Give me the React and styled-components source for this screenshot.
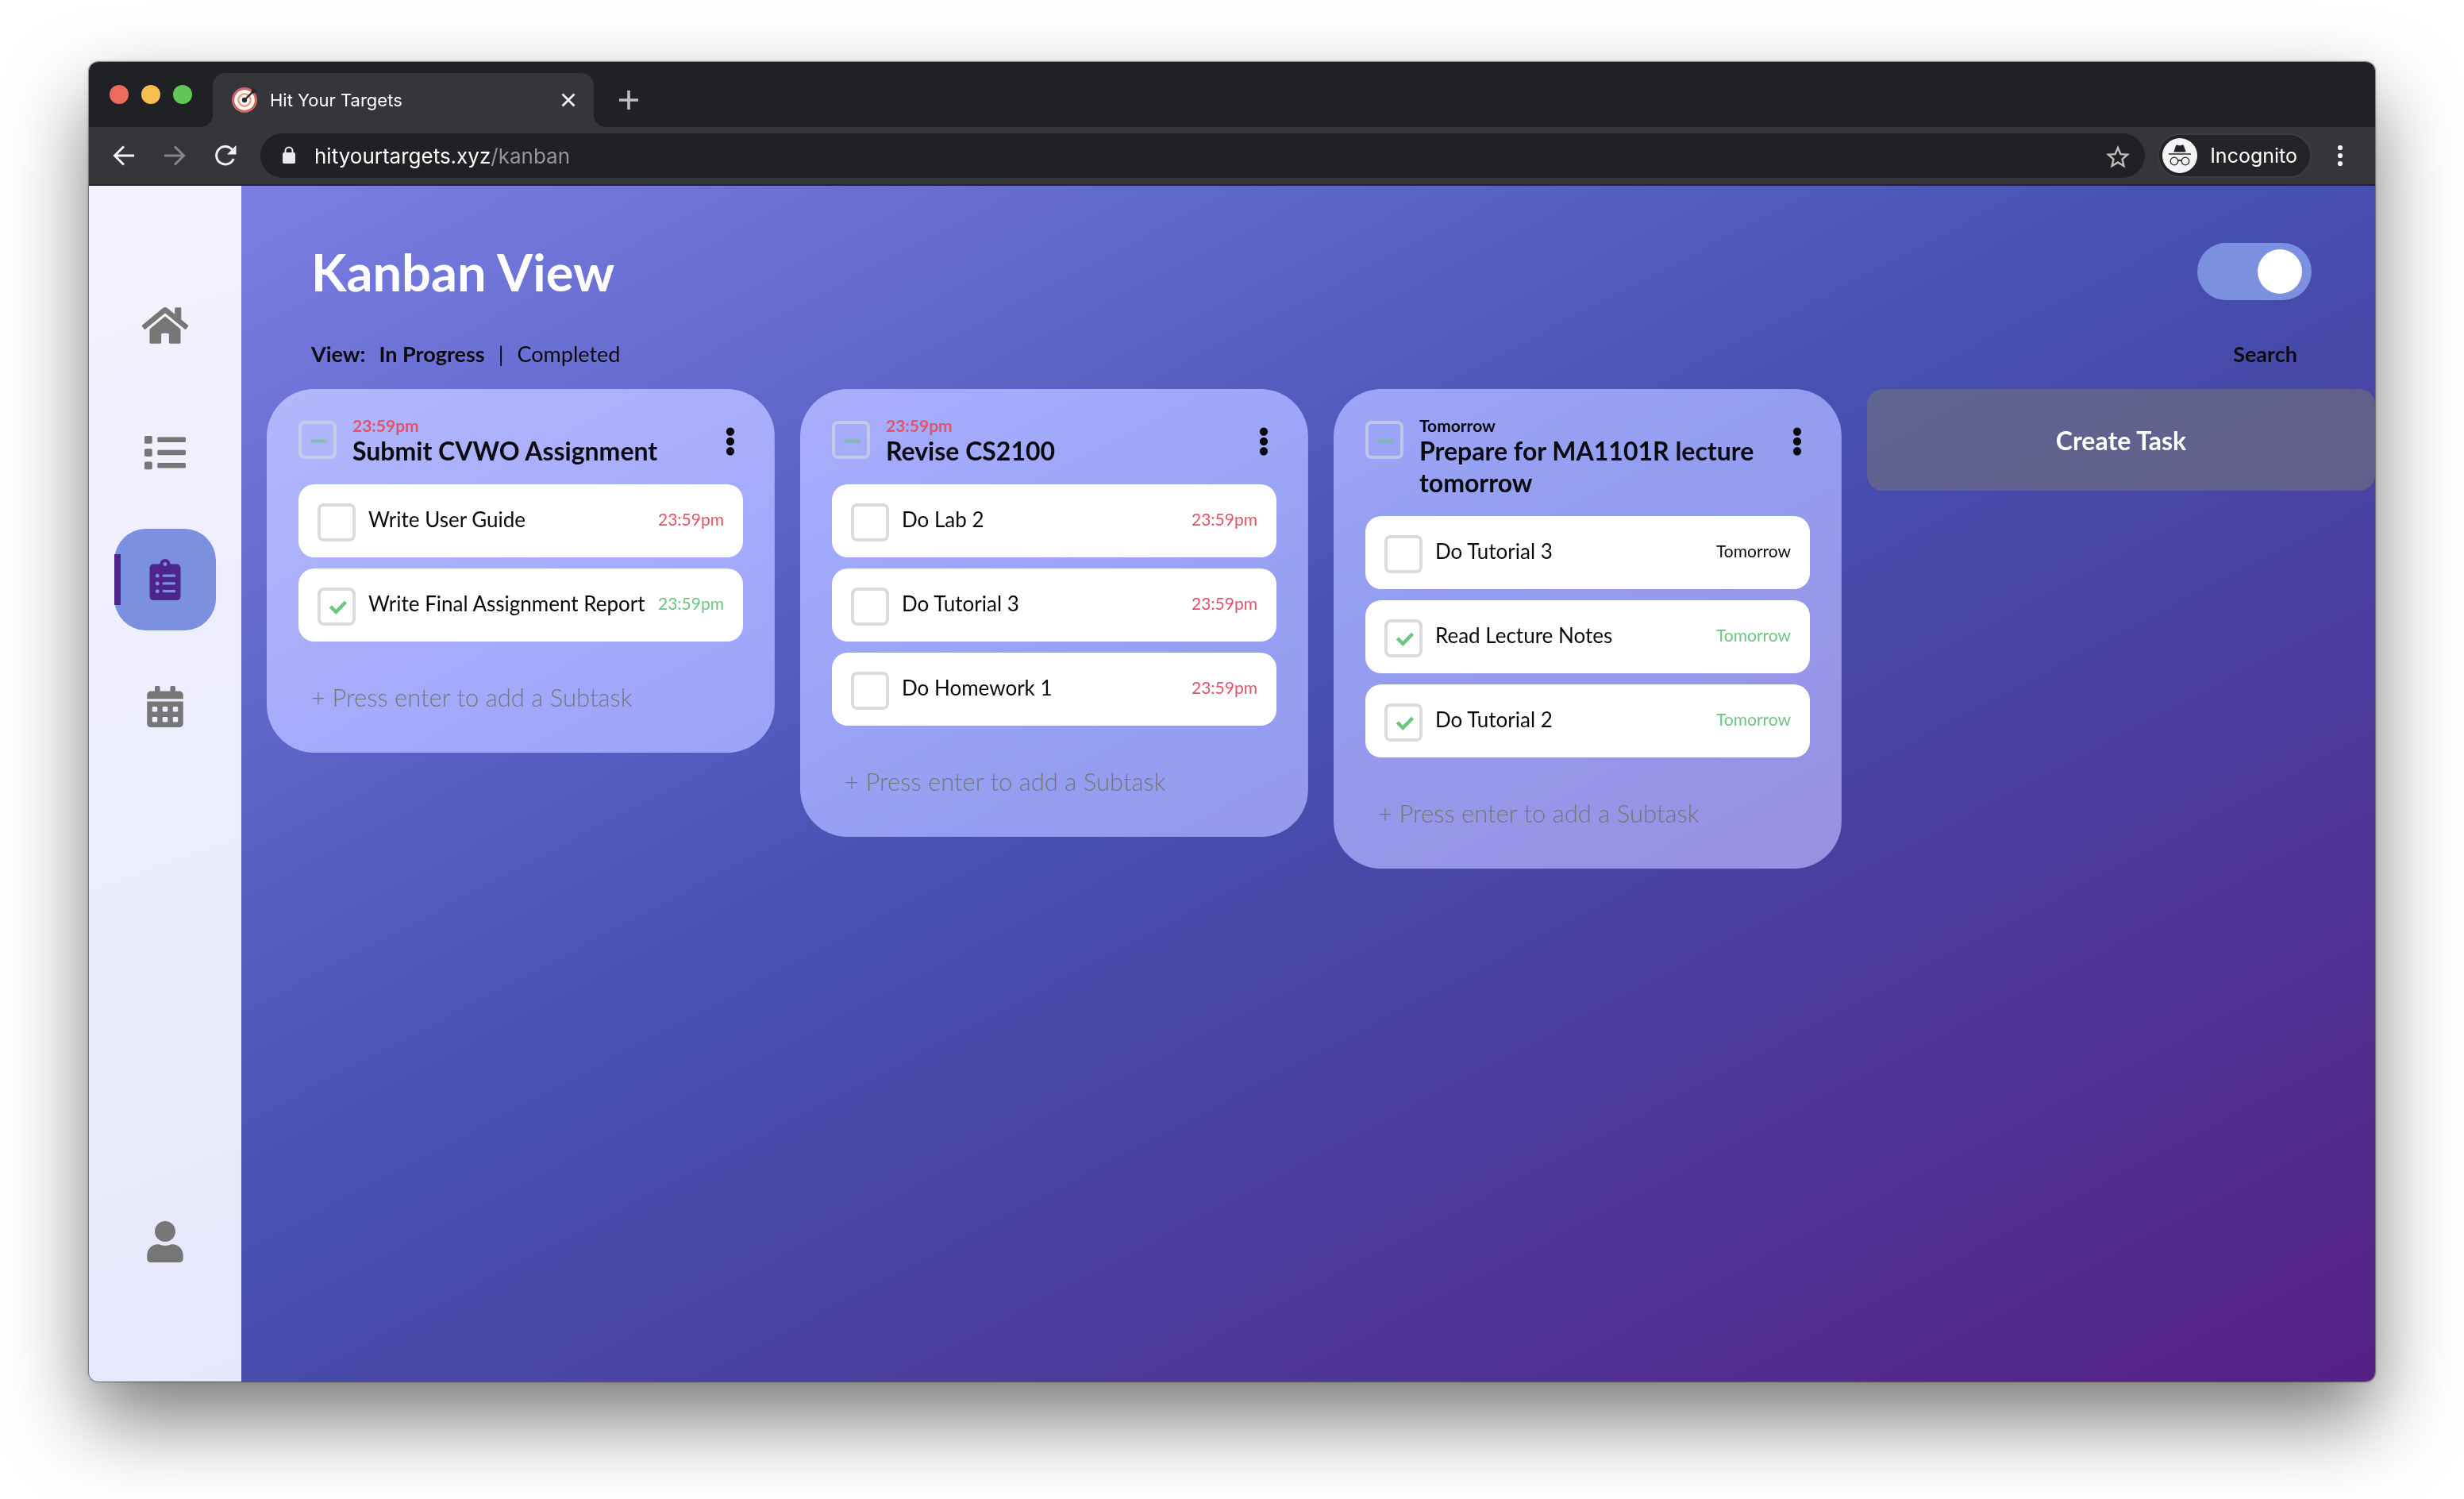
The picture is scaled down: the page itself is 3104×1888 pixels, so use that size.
import React, { useState } from "react";
import styled, { createGlobalStyle } from "styled-components";
import { FaHome, FaList, FaClipboardList, FaCalendarAlt, FaUser, FaEllipsisV } from "react-icons/fa";

const colors = {
  strip: "#202124",
  toolbar: "#35363a",
  accent: "#7b90df",
  purple: "#4e258b",
  grey: "#767676",
  ink: "#0b0b0f",
  due: "#e2536b",
  done: "#6cc682",
};

const GlobalStyle = createGlobalStyle`
  * { box-sizing: border-box; }
  body {
    margin: 0;
    background: #fff;
    font-family: Lato, "Liberation Sans", sans-serif;
    color: ${colors.ink};
  }
  button, input { font: inherit; color: inherit; }
  button { border: 0; padding: 0; background: none; cursor: pointer; }
  h1, h2, p, ul { margin: 0; padding: 0; }
  ul { list-style: none; }
`;

const Desktop = styled.div`
  display: flex;
  min-height: 100vh;
  padding: 78px 112px 148px;
`;

const BrowserWindow = styled.div`
  flex: 1;
  min-width: 0;
  display: flex;
  flex-direction: column;
  border-radius: 12px;
  overflow: hidden;
  box-shadow: 0 0 0 1px rgba(0, 0, 0, 0.3), 0 0 4px rgba(0, 0, 0, 0.3),
    0 48px 100px rgba(0, 0, 0, 0.52);
`;

const TabStrip = styled.div`
  display: flex;
  align-items: flex-end;
  height: 82px;
  padding-left: 26px;
  background: ${colors.strip};
  font-family: Inter, Roboto, sans-serif;
`;

const TrafficLights = styled.div`
  display: flex;
  gap: 16px;
  align-self: center;
  margin-right: 26px;
`;

const Light = styled.button`
  width: 24px;
  height: 24px;
  border-radius: 50%;
  background: ${(p) => p.$color};
`;

const Tab = styled.div`
  position: relative;
  display: flex;
  align-items: center;
  width: 480px;
  height: 68px;
  padding: 0 20px 0 24px;
  border-radius: 16px 16px 0 0;
  background: ${colors.toolbar};
  color: #fff;
  font-size: 22px;

  &::before,
  &::after {
    content: "";
    position: absolute;
    bottom: 0;
    width: 16px;
    height: 16px;
  }
  &::before {
    left: -16px;
    background: radial-gradient(circle at 0 0, transparent 16px, ${colors.toolbar} 16px);
  }
  &::after {
    right: -16px;
    background: radial-gradient(circle at 100% 0, transparent 16px, ${colors.toolbar} 16px);
  }
`;

const TabTitle = styled.span`
  flex: 1;
  margin-left: 16px;
`;

const IconButton = styled.button`
  display: grid;
  place-items: center;
  flex: none;
  width: ${(p) => p.$size || 64}px;
  height: ${(p) => p.$size || 64}px;
  color: ${(p) => p.$color || "#f1f3f4"};
`;

const NewTab = styled(IconButton)`
  margin-left: 10px;
`;

const Toolbar = styled.div`
  display: flex;
  align-items: center;
  height: 74px;
  padding: 0 8px 0 12px;
  border-bottom: 2px solid #242528;
  background: ${colors.toolbar};
  color: #fff;
  font-family: Inter, Roboto, sans-serif;
  font-size: 26px;
`;

const AddressBar = styled.div`
  flex: 1;
  display: flex;
  align-items: center;
  height: 56px;
  margin: 0 16px 0 12px;
  padding: 0 20px 0 26px;
  border-radius: 28px;
  background: ${colors.strip};
`;

const Url = styled.span`
  flex: 1;
  margin-left: 22px;
`;

const UrlPath = styled.span`
  color: #94969a;
`;

const Incognito = styled.button`
  display: flex;
  align-items: center;
  gap: 16px;
  height: 56px;
  padding: 0 16px 0 4px;
  border: 2px solid #3d3d42;
  border-radius: 28px;
  background: #242428;
  font-size: 25px;
`;

const AppBody = styled.div`
  flex: 1;
  display: flex;
  background: linear-gradient(to bottom right, #7f81e6 0%, #4652b3 46%, #4847a7 58%, #552083 100%);
`;

const Sidebar = styled.nav`
  flex: none;
  display: flex;
  flex-direction: column;
  align-items: center;
  gap: 32px;
  width: 192px;
  padding: 112px 0;
  background: linear-gradient(160deg, #f3f2fe, #ecedfd 50%, #e6e7fa);
`;

const NavLink = styled.a`
  position: relative;
  display: grid;
  place-items: center;
  width: 128px;
  height: 128px;
  border-radius: 40px;
  color: ${(p) => (p.$active ? colors.purple : colors.grey)};
  background: ${(p) => (p.$active ? colors.accent : "transparent")};

  &:last-child {
    margin-top: auto;
  }
  &::before {
    content: "";
    display: ${(p) => (p.$active ? "block" : "none")};
    position: absolute;
    left: 0;
    width: 8px;
    height: 64px;
    background: ${colors.purple};
  }
  svg {
    width: 60px;
    height: 52px;
  }
`;

const Main = styled.main`
  flex: 1;
  min-width: 0;
  padding-top: 72px;
`;

const PageHeader = styled.header`
  display: flex;
  align-items: center;
  justify-content: space-between;
  height: 72px;
  padding: 0 80px 0 88px;
`;

const PageTitle = styled.h1`
  font-size: 65px;
  font-weight: 700;
  line-height: 72px;
  color: #fff;
`;

const Switch = styled.input`
  appearance: none;
  display: flex;
  align-items: center;
  justify-content: ${(p) => (p.checked ? "flex-end" : "flex-start")};
  width: 144px;
  height: 72px;
  margin: 0;
  padding: 0 12px;
  border-radius: 36px;
  background: ${colors.accent};
  cursor: pointer;

  &::after {
    content: "";
    width: 56px;
    height: 56px;
    border-radius: 50%;
    background: #fff;
  }
`;

const FilterBar = styled.div`
  display: flex;
  align-items: center;
  gap: 17px;
  height: 90px;
  margin-top: 22px;
  padding: 0 98px 0 88px;
  font-size: 27px;
`;

const FilterLabel = styled.span`
  font-weight: 700;
`;

const FilterButton = styled.button`
  font-weight: ${(p) => (p.$strong ? 700 : 400)};
`;

const SearchButton = styled(FilterButton)`
  margin-left: auto;
`;

const Board = styled.div`
  display: grid;
  grid-template-columns: repeat(4, minmax(0, 1fr));
  align-items: start;
  gap: 32px;
  padding-left: 32px;
`;

const Card = styled.section`
  padding: 32px 40px;
  border-radius: 60px;
  background: rgba(250, 250, 246, 0.4);
  backdrop-filter: brightness(1.2) saturate(1.2);
`;

const CardHeader = styled.header`
  display: flex;
  align-items: flex-start;
  margin-bottom: 22px;
`;

const CardHeading = styled.div`
  flex: 1;
  min-width: 0;
  margin: 2px 20px 0;
`;

const DueTime = styled.p`
  font-size: 21px;
  font-weight: ${(p) => (p.$bold ? 700 : 400)};
  line-height: ${(p) => (p.$bold ? 24 : 40)}px;
  color: ${(p) => colors[p.$tone]};
`;

const CardTitle = styled.h2`
  font-size: 32px;
  font-weight: 700;
  line-height: 40px;
`;

const KebabButton = styled.button`
  display: grid;
  place-items: center;
  width: 32px;
  height: 48px;
  margin-top: 10px;

  svg {
    width: auto;
    height: 36px;
  }
`;

const TickBox = styled.span`
  flex: none;
  display: grid;
  width: 48px;
  height: 48px;
  margin-top: ${(p) => (p.$muted ? 8 : 0)}px;
  opacity: ${(p) => (p.$muted ? 0.6 : 1)};

  input,
  svg {
    grid-area: 1 / 1;
    width: 48px;
    height: 48px;
    margin: 0;
  }
  input {
    appearance: none;
    border: 4px solid #dbdbdb;
    border-radius: 8px;
  }
  svg {
    pointer-events: none;
  }
`;

const Subtasks = styled.ul`
  display: grid;
  grid-template-columns: minmax(0, 1fr);
  gap: 14px;
`;

const SubtaskRow = styled.li`
  display: flex;
  align-items: flex-start;
  padding: 24px 24px 20px;
  border-radius: 20px;
  background: #fff;
`;

const SubtaskLabel = styled.label`
  flex: 1;
  padding-left: 16px;
  font-size: 26px;
  line-height: 40px;
  white-space: nowrap;
`;

const NewSubtask = styled.input`
  display: block;
  width: 100%;
  height: 76px;
  margin-top: 32px;
  padding: 0 16px;
  border: 0;
  background: none;
  font-size: 31px;
  font-weight: 300;

  &::placeholder {
    color: ${colors.grey};
    opacity: 1;
  }
`;

const CreateTask = styled.button`
  height: 128px;
  border-radius: 20px;
  background: rgba(118, 118, 118, 0.54);
  color: #fff;
  font-size: 32px;
  font-weight: 700;
`;

function TargetIcon() {
  return (
    <svg width="32" height="32" viewBox="0 0 32 32" aria-hidden="true">
      <circle cx="16" cy="16" r="16" fill="#d46464" />
      <circle cx="16" cy="16" r="12.8" fill="#fff" />
      <circle cx="16" cy="16" r="7.7" fill="none" stroke="#f09a78" strokeWidth="2.4" />
      <circle cx="16" cy="16" r="3.2" fill="#26282c" />
      <path d="M16 16 27 5" stroke="#26282c" strokeWidth="2.4" />
      <path d="m24.500 7.500.5-4L29 0l.5 3 2.500.5-3.500 4z" fill="#26282c" />
    </svg>
  );
}

function LineIcon({ size, d, width = 3 }) {
  return (
    <svg width={size} height={size} viewBox="0 0 32 32" fill="none" stroke="currentColor" strokeWidth={width} aria-hidden="true">
      <path d={d} />
    </svg>
  );
}

function ReloadIcon() {
  return (
    <svg width="32" height="32" viewBox="0 0 32 32" aria-hidden="true">
      <path d="M26.200 20A11.200 11.200 0 1 1 24.500 8.700" fill="none" stroke="currentColor" strokeWidth="3" />
      <path d="M29.500 3v11.500H18z" fill="currentColor" />
    </svg>
  );
}

function LockIcon() {
  return (
    <svg width="20" height="24" viewBox="0 0 20 24" aria-hidden="true">
      <rect x="2" y="8" width="16" height="14" rx="2" fill="#e8eaed" />
      <path d="M5.500 9V6a4.500 4.500 0 0 1 9 0v3" fill="none" stroke="#e8eaed" strokeWidth="2" />
    </svg>
  );
}

function StarIcon() {
  return (
    <svg width="36" height="36" viewBox="0 0 24 24" aria-hidden="true">
      <path
        d="M22 9.240l-7.190-.62L12 2 9.190 8.630 2 9.240l5.460 4.730L5.820 21 12 17.270 18.180 21l-1.630-7.030L22 9.240zM12 15.400l-3.760 2.270 1-4.280-3.320-2.880 4.380-.38L12 6.100l1.710 4.040 4.380.38-3.320 2.880 1 4.280L12 15.400z"
        fill="currentColor"
      />
    </svg>
  );
}

function IncognitoIcon() {
  return (
    <svg width="44" height="44" viewBox="0 0 44 44" aria-hidden="true">
      <circle cx="22" cy="22" r="22" fill="#f1f3f4" />
      <path d="M14.300 17.500 17 9.500q.4-1.200 1.700-.9l3.300.9 3.300-.9q1.300-.3 1.700.9l2.700 8z" fill="#242428" />
      <path d="M8 20h28" stroke="#242428" strokeWidth="1.600" />
      <circle cx="15" cy="29" r="4.800" fill="none" stroke="#242428" strokeWidth="1.300" />
      <circle cx="29" cy="29" r="4.800" fill="none" stroke="#242428" strokeWidth="1.300" />
      <path d="M19.800 28.500q2.200-1.300 4.400 0" fill="none" stroke="#242428" strokeWidth="1.600" />
    </svg>
  );
}

function MoreIcon() {
  return (
    <svg width="8" height="28" viewBox="0 0 8 28" fill="currentColor" aria-hidden="true">
      <circle cx="4" cy="4" r="3.100" />
      <circle cx="4" cy="14" r="3.100" />
      <circle cx="4" cy="24" r="3.100" />
    </svg>
  );
}

function Tick({ id, checked, onChange, partial, label }) {
  return (
    <TickBox $muted={partial}>
      <input type="checkbox" id={id} checked={checked} onChange={onChange} aria-label={label} />
      <svg viewBox="0 0 48 48" fill="none" stroke={colors.done} strokeWidth="4.500" aria-hidden="true">
        {partial && <path d="M15.500 25.500h20" />}
        {checked && !partial && <path d="m16.300 23.800 7 7 12.200-12.500" />}
      </svg>
    </TickBox>
  );
}

const initialTasks = [
  {
    id: "cvwo",
    due: "23:59pm",
    tone: "due",
    title: "Submit CVWO Assignment",
    subtasks: [
      { name: "Write User Guide", due: "23:59pm", done: false },
      { name: "Write Final Assignment Report", due: "23:59pm", done: true },
    ],
  },
  {
    id: "cs2100",
    due: "23:59pm",
    tone: "due",
    title: "Revise CS2100",
    subtasks: [
      { name: "Do Lab 2", due: "23:59pm", done: false },
      { name: "Do Tutorial 3", due: "23:59pm", done: false },
      { name: "Do Homework 1", due: "23:59pm", done: false },
    ],
  },
  {
    id: "ma1101r",
    due: "Tomorrow",
    tone: "ink",
    title: "Prepare for MA1101R lecture tomorrow",
    subtasks: [
      { name: "Do Tutorial 3", due: "Tomorrow", done: false },
      { name: "Read Lecture Notes", due: "Tomorrow", done: true },
      { name: "Do Tutorial 2", due: "Tomorrow", done: true },
    ],
  },
];

function TaskCard({ task, onToggle }) {
  return (
    <Card>
      <CardHeader>
        <Tick partial checked={false} onChange={() => {}} label={task.title} />
        <CardHeading>
          <DueTime $bold $tone={task.tone}>{task.due}</DueTime>
          <CardTitle>{task.title}</CardTitle>
        </CardHeading>
        <KebabButton aria-label="Task options">
          <FaEllipsisV />
        </KebabButton>
      </CardHeader>
      <Subtasks>
        {task.subtasks.map((sub, i) => {
          const id = `${task.id}-${i}`;
          return (
            <SubtaskRow key={id}>
              <Tick id={id} checked={sub.done} onChange={() => onToggle(task.id, i)} />
              <SubtaskLabel htmlFor={id}>{sub.name}</SubtaskLabel>
              <DueTime $tone={sub.done ? "done" : task.tone}>{sub.due}</DueTime>
            </SubtaskRow>
          );
        })}
      </Subtasks>
      <NewSubtask placeholder="+ Press enter to add a Subtask" aria-label="New subtask" />
    </Card>
  );
}

const navItems = [
  { label: "Home", icon: FaHome },
  { label: "List", icon: FaList },
  { label: "Kanban", icon: FaClipboardList, active: true },
  { label: "Calendar", icon: FaCalendarAlt },
  { label: "Profile", icon: FaUser },
];

export default function App() {
  const [tasks, setTasks] = useState(initialTasks);
  const [kanban, setKanban] = useState(true);

  const toggle = (taskId, index) =>
    setTasks((list) =>
      list.map((t) =>
        t.id !== taskId
          ? t
          : { ...t, subtasks: t.subtasks.map((s, i) => (i === index ? { ...s, done: !s.done } : s)) }
      )
    );

  return (
    <>
      <GlobalStyle />
      <Desktop>
        <BrowserWindow>
          <TabStrip>
            <TrafficLights>
              <Light $color="#ed6a5f" aria-label="Close window" />
              <Light $color="#f5bf50" aria-label="Minimise window" />
              <Light $color="#62c655" aria-label="Zoom window" />
            </TrafficLights>
            <Tab>
              <TargetIcon />
              <TabTitle>Hit Your Targets</TabTitle>
              <IconButton $size={24} aria-label="Close tab">
                <LineIcon size={24} width={3.6} d="M6 6l20 20M26 6L6 26" />
              </IconButton>
            </Tab>
            <NewTab $size={68} $color="#bdc1c6" aria-label="New tab">
              <LineIcon size={32} width={3.6} d="M16 4v24M4 16h24" />
            </NewTab>
          </TabStrip>
          <Toolbar>
            <IconButton aria-label="Back">
              <LineIcon size={32} d="M29 16H5M16 4.500 4.500 16 16 27.500" />
            </IconButton>
            <IconButton $color="#85868a" aria-label="Forward">
              <LineIcon size={32} d="M3 16h24M16 4.500 27.500 16 16 27.500" />
            </IconButton>
            <IconButton aria-label="Reload">
              <ReloadIcon />
            </IconButton>
            <AddressBar>
              <LockIcon />
              <Url>
                hityourtargets.xyz<UrlPath>/kanban</UrlPath>
              </Url>
              <IconButton $size={32} $color="#bdbdbd" aria-label="Bookmark this page">
                <StarIcon />
              </IconButton>
            </AddressBar>
            <Incognito>
              <IncognitoIcon />
              Incognito
            </Incognito>
            <IconButton $size={72} aria-label="Browser menu">
              <MoreIcon />
            </IconButton>
          </Toolbar>
          <AppBody>
            <Sidebar>
              {navItems.map(({ label, icon: Icon, active }) => (
                <NavLink key={label} href={`#${label.toLowerCase()}`} aria-label={label} $active={active}>
                  <Icon />
                </NavLink>
              ))}
            </Sidebar>
            <Main>
              <PageHeader>
                <PageTitle>Kanban View</PageTitle>
                <Switch
                  type="checkbox"
                  role="switch"
                  aria-label="Kanban view"
                  checked={kanban}
                  onChange={(e) => setKanban(e.target.checked)}
                />
              </PageHeader>
              <FilterBar>
                <FilterLabel>View:</FilterLabel>
                <FilterButton $strong>In Progress</FilterButton>
                <span>|</span>
                <FilterButton>Completed</FilterButton>
                <SearchButton $strong>Search</SearchButton>
              </FilterBar>
              <Board>
                {tasks.map((task) => (
                  <TaskCard key={task.id} task={task} onToggle={toggle} />
                ))}
                <CreateTask>Create Task</CreateTask>
              </Board>
            </Main>
          </AppBody>
        </BrowserWindow>
      </Desktop>
    </>
  );
}
